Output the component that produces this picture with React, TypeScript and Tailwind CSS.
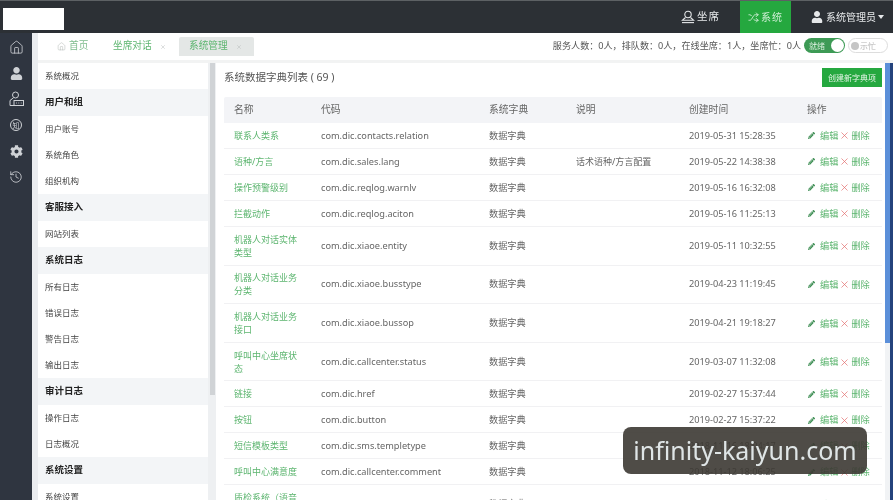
import { History, Home, Shuffle, X } from 'lucide-react';
import { FaCog, FaPencilAlt, FaUser } from 'react-icons/fa';

interface DictRow {
  name: string;
  code: string;
  desc?: string;
  time: string;
  tall?: boolean;
}

const rows: DictRow[] = [
  { name: '联系人类系', code: 'com.dic.contacts.relation', time: '2019-05-31 15:28:35' },
  { name: '语种/方言', code: 'com.dic.sales.lang', desc: '话术语种/方言配置', time: '2019-05-22 14:38:38' },
  { name: '操作预警级别', code: 'com.dic.reqlog.warnlv', time: '2019-05-16 16:32:08' },
  { name: '拦截动作', code: 'com.dic.reqlog.aciton', time: '2019-05-16 11:25:13' },
  { name: '机器人对话实体类型', code: 'com.dic.xiaoe.entity', time: '2019-05-11 10:32:55', tall: true },
  { name: '机器人对话业务分类', code: 'com.dic.xiaoe.busstype', time: '2019-04-23 11:19:45', tall: true },
  { name: '机器人对话业务接口', code: 'com.dic.xiaoe.bussop', time: '2019-04-21 19:18:27', tall: true },
  { name: '呼叫中心坐席状态', code: 'com.dic.callcenter.status', time: '2019-03-07 11:32:08', tall: true },
  { name: '链接', code: 'com.dic.href', time: '2019-02-27 15:37:44' },
  { name: '按钮', code: 'com.dic.button', time: '2019-02-27 15:37:22' },
  { name: '短信模板类型', code: 'com.dic.sms.templetype', time: '2018-11-16 18:04:17' },
  { name: '呼叫中心满意度', code: 'com.dic.callcenter.comment', time: '2018-11-12 18:06:25' },
  { name: '质检系统（语音质检）', code: 'com.dic.qc.voice', time: '2018-11-09 15:10:11', tall: true },
];

const menu: { label: string; head?: boolean }[] = [
  { label: '系统概况' },
  { label: '用户和组', head: true },
  { label: '用户账号' },
  { label: '系统角色' },
  { label: '组织机构' },
  { label: '客服接入', head: true },
  { label: '网站列表' },
  { label: '系统日志', head: true },
  { label: '所有日志' },
  { label: '错误日志' },
  { label: '警告日志' },
  { label: '输出日志' },
  { label: '审计日志', head: true },
  { label: '操作日志' },
  { label: '日志概况' },
  { label: '系统设置', head: true },
  { label: '系统设置' },
];

function SeatIcon() {
  return (
    <svg width="14" height="14" viewBox="0 0 14 14" fill="none" stroke="currentColor" strokeWidth="1.1">
      <circle cx="7" cy="4.5" r="3.2" />
      <path d="M4.5 7.5 L1.5 10.2 H12.5 L9.5 7.5" />
      <path d="M1 12.6 H13" />
    </svg>
  );
}

function GroupIcon() {
  return (
    <svg width="15" height="16" viewBox="0 0 15 16" fill="none" stroke="currentColor" strokeWidth="1">
      <circle cx="6.5" cy="4" r="3" />
      <path d="M4.5 6.8 L1 9.5 V14.5 H5" />
      <rect x="5" y="9.5" width="9.5" height="5" />
      <path d="M7 12 H7.8 M9.4 12 H10.2 M11.8 12 H12.6" />
    </svg>
  );
}

function TopBar() {
  return (
    <div className="flex h-[33px] items-stretch justify-between border-t border-[#5d6164] bg-[#2c3035]">
      <div className="ml-[3px] mt-[7px] h-[22px] w-[61px] bg-white" />
      <div className="flex items-stretch text-[10px] text-[#e6e8ea]">
        <div className="mr-[20px] flex items-center gap-[2px] text-[10.5px]">
          <SeatIcon />
          <span className="tracking-[1px]">坐席</span>
        </div>
        <div className="flex w-[51px] items-center justify-center gap-[2px] bg-[#25a83f] text-[#cdeed3]">
          <Shuffle size={11} strokeWidth={2} />
          <span className="tracking-[1px]">系统</span>
        </div>
        <div className="ml-[20px] mr-[9px] flex items-center gap-[3px]">
          <FaUser size={12} />
          <span>系统管理员</span>
          <span className="ml-[-1px] h-0 w-0 border-x-[3px] border-t-[4px] border-x-transparent border-t-[#e6e8ea]" />
        </div>
      </div>
    </div>
  );
}

const navCell = 'flex h-[26px] items-center justify-center';

function LeftNav() {
  return (
    <div className="flex w-[32px] shrink-0 flex-col items-center bg-[#2f3540] pt-[1px] text-[#cfd2d6]">
      <div className={navCell}>
        <Home size={15} strokeWidth={1.3} />
      </div>
      <div className={navCell}>
        <FaUser size={13} />
      </div>
      <div className={navCell}>
        <GroupIcon />
      </div>
      <div className={navCell}>
        <div className="flex h-[12px] w-[12px] items-center justify-center rounded-full border border-[#cfd2d6] text-[7px] leading-none">
          知
        </div>
      </div>
      <div className={navCell}>
        <FaCog size={13} />
      </div>
      <div className={navCell}>
        <History size={14} strokeWidth={1.4} />
      </div>
    </div>
  );
}

function TabBar() {
  return (
    <div className="flex h-[27px] items-start justify-between bg-white pr-[5px]">
      <div className="flex items-end pl-[19px] pt-[4px] text-[9.7px] text-[#5cb56f]">
        <div className="mb-[2px] flex w-[56px] items-center gap-[3px]">
          <Home size={9} strokeWidth={1.2} className="text-[#aab0ac]" />
          <span className="text-[#7fbd8d]">首页</span>
        </div>
        <div className="mb-[2px] flex w-[66px] items-center gap-[8px]">
          <span>坐席对话</span>
          <X size={6} className="text-[#b8bcbc]" />
        </div>
        <div className="flex h-[19px] w-[75px] items-center gap-[8px] rounded-t-[2px] bg-[#e4e7e6] pl-[10px]">
          <span>系统管理</span>
          <X size={6} className="text-[#b8bcbc]" />
        </div>
      </div>
      <div className="flex items-center pt-[5px] text-[9.1px] text-[#555]">
        <span>服务人数：0人，排队数：0人，在线坐席：1人，坐席忙：0人</span>
        <div className="ml-[3px] flex h-[15px] w-[41px] items-center justify-between rounded-full bg-[#3d9a55] pl-[5px] pr-[1px] text-[8px] text-[#d5ecd9]">
          <span>就绪</span>
          <span className="h-[13px] w-[13px] rounded-full bg-white" />
        </div>
        <div className="ml-[3px] flex h-[15px] w-[40px] items-center gap-[1px] rounded-full border border-[#ddd] pl-[2px] text-[8px] text-[#b5b5b5]">
          <span className="h-[8px] w-[8px] rounded-full bg-[#c5c5c5]" />
          <span>示忙</span>
        </div>
      </div>
    </div>
  );
}

function SideMenu() {
  return (
    <div className="w-[170px] shrink-0 overflow-hidden bg-white">
      {menu.map((item, i) =>
        item.head ? (
          <div
            key={i}
            className="flex h-[27px] items-center bg-[#f3f5f7] pl-[7px] text-[9.5px] font-bold text-[#222]"
          >
            {item.label}
          </div>
        ) : (
          <div key={i} className="flex h-[26px] items-center pl-[7px] text-[8.5px] text-[#444]">
            {item.label}
          </div>
        )
      )}
    </div>
  );
}

function DictTable() {
  return (
    <div className="ml-[8px] mr-[3px] text-[9.2px] text-[#666]">
      <div className="flex h-[26px] items-center rounded-t-[2px] bg-[#f3f4f7] text-[9.8px] text-[#666]">
        <div className="w-[97px] pl-[10px]">名称</div>
        <div className="w-[168px]">代码</div>
        <div className="w-[87px]">系统字典</div>
        <div className="w-[113px]">说明</div>
        <div className="w-[118px]">创建时间</div>
        <div>操作</div>
      </div>
      {rows.map((row) => (
        <div
          key={row.code}
          className={`flex items-center border-b border-[#f1f1f3] ${row.tall ? 'h-[38.6px]' : 'h-[26px]'}`}
        >
          <div className="w-[97px] pl-[10px] pr-[20px] text-[9px] leading-[13px] text-[#5cb56f]">{row.name}</div>
          <div className="w-[168px]">{row.code}</div>
          <div className="w-[87px]">数据字典</div>
          <div className="w-[113px] text-[9px]">{row.desc}</div>
          <div className="w-[118px]">{row.time}</div>
          <div className="flex items-center pl-[1px] pt-[1px] text-[#5cb56f]">
            <FaPencilAlt size={7} className="mr-[5px] text-[#3f8f55]" />
            <span>编辑</span>
            <X size={11} strokeWidth={1.5} className="mx-[1px] text-[#e26a6a]" />
            <span>删除</span>
          </div>
        </div>
      ))}
    </div>
  );
}

export default function App() {
  return (
    <div
      className="relative h-[500px] w-[893px] overflow-hidden bg-white blur-[0.3px]"
      style={{ fontFamily: '"Noto Sans", "Noto Sans CJK SC", sans-serif' }}
    >
      <TopBar />
      <div className="flex h-[467px]">
        <LeftNav />
        <div className="w-[6px] shrink-0 bg-[#eaecef]" />
        <div className="flex min-w-0 flex-1 flex-col">
          <TabBar />
          <div className="flex min-h-0 flex-1 border-t-[3px] border-[#f2f3f3]">
            <SideMenu />
            <div className="flex w-[8px] shrink-0 bg-[#eef0f2]">
              <div className="mx-auto h-[332px] w-[5px] bg-[#d0d3d6]" />
            </div>
            <div className="min-w-0 flex-1 overflow-hidden">
              <div className="flex h-[34px] items-start justify-between pl-[8px] pr-[3px] pt-[5px]">
                <span className="flex h-[19px] items-center text-[10.5px] text-[#555]">系统数据字典列表 ( 69 )</span>
                <span className="flex h-[19px] w-[60px] items-center justify-center bg-[#25a83f] text-[8px] text-[#e6f5e8]">
                  创建新字典项
                </span>
              </div>
              <DictTable />
            </div>
            <div className="flex w-[8px] shrink-0 bg-[#f1f3f5]">
              <div className="h-[280px] w-[5px] bg-[#5b8fd9]" />
              <div className="w-[3px] bg-[#24437c]" />
            </div>
          </div>
        </div>
      </div>
      {/* watermark */}
      <div className="absolute left-[623px] top-[427px] flex h-[47px] w-[244px] items-center justify-center whitespace-nowrap rounded-[8px] bg-[#3c3833]/90 text-[25px] leading-none text-[#dfe5e6]">
        infinity-kaiyun.com
      </div>
    </div>
  );
}
